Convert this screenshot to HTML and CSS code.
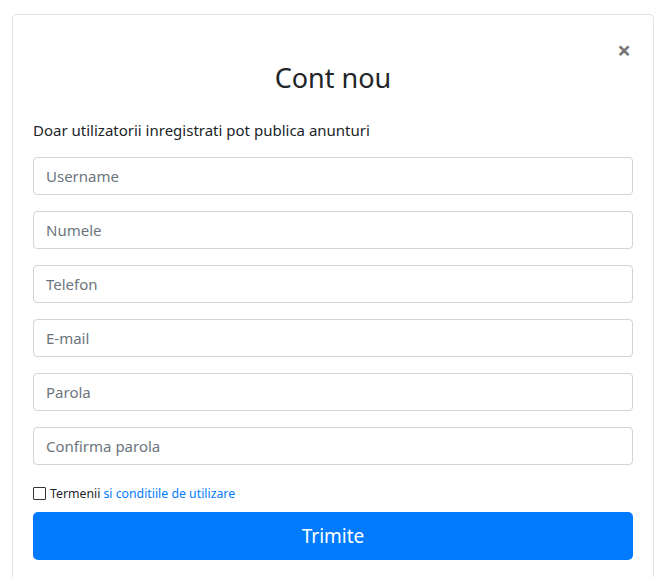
FILE: index.html
```html
<!DOCTYPE html>
<html lang="ro">
<head>
<meta charset="utf-8">
<link rel="stylesheet" href="styles.css">
</head>
<body>
<div class="card">
  <div class="header">
    <h3 class="title">Cont nou</h3>
    <button class="close" type="button">&times;</button>
  </div>
  <p class="lead">Doar utilizatorii inregistrati pot publica anunturi</p>
  <form class="form">
    <input class="field" type="text" placeholder="Username">
    <input class="field" type="text" placeholder="Numele">
    <input class="field" type="text" placeholder="Telefon">
    <input class="field" type="text" placeholder="E-mail">
    <input class="field" type="password" placeholder="Parola">
    <input class="field" type="password" placeholder="Confirma parola">
    <label class="terms"><span class="box"></span>Termenii <a href="#" class="link">si conditiile de utilizare</a></label>
    <button class="submit" type="button">Trimite</button>
  </form>
</div>
</body>
</html>
```
FILE: styles.css
```css
* { box-sizing: border-box; }
html, body { margin: 0; background: #fff; }
body {
  padding: 14px 12px 0;
  font-family: "Noto Sans", "Open Sans", sans-serif;
  color: #212529;
  overflow: hidden;
  height: 577px;
}
.card {
  border: 1px solid #dee2e6;
  border-bottom: 0;
  border-radius: 5px 5px 0 0;
  padding: 46px 20px 0;
  height: 563px;
  overflow: hidden;
}
.header {
  position: relative;
  display: flex;
  justify-content: center;
}
.title {
  margin: 0;
  font-size: 27px;
  font-weight: 400;
  line-height: 33px;
}
.close {
  position: absolute;
  right: 2px;
  top: -23px;
  border: 0;
  background: none;
  padding: 0;
  font-family: "Noto Sans", sans-serif;
  font-size: 24px;
  line-height: 24px;
  font-weight: 700;
  color: #666;
  opacity: .9;
}
.lead {
  margin: 24px 0 15px;
  font-size: 15px;
  line-height: 24px;
}
.form {
  display: flex;
  flex-direction: column;
  gap: 16px;
}
.field {
  height: 38px;
  border: 1px solid #ced4da;
  border-radius: 4px;
  padding: 0 12px;
  font-family: inherit;
  font-size: 15px;
  color: #495057;
}
.field::placeholder { color: #6c757d; }
.terms {
  display: flex;
  align-items: center;
  font-size: 12.3px;
  margin-top: 4px;
  margin-bottom: -6px;
  color: #212529;
}
.box {
  width: 13px;
  height: 13px;
  border: 1px solid #333;
  margin-right: 4px;
  border-radius: 1px;
}
.link { color: #007bff; text-decoration: none; margin-left: 3px; }
.submit {
  height: 48px;
  border: 0;
  border-radius: 5px;
  background: #007bff;
  color: #fff;
  font-family: inherit;
  font-size: 19px;
}
```
